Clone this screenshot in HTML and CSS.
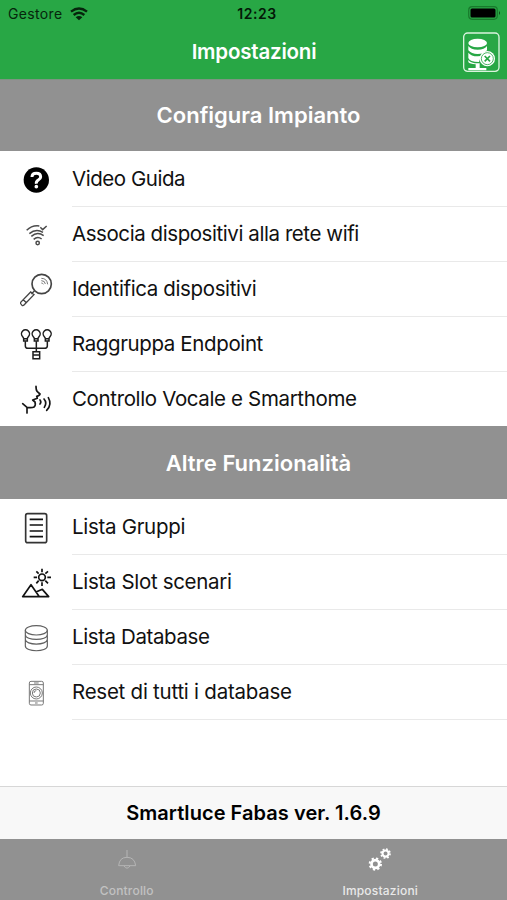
FILE: index.html
```html
<!DOCTYPE html>
<html lang="it">
<head>
<meta charset="utf-8">
<title>Impostazioni</title>
<link rel="stylesheet" href="styles.css">
</head>
<body>
<div class="app">
  <header class="top">
    <div class="status">
      <div class="carrier"><span>Gestore</span>
        <svg width="18" height="14" viewBox="0 0 54 42"><g fill="none" stroke="#06250c" stroke-width="7"><path d="M3 14Q27-5 51 14M11 24Q27 10 43 24"/></g><path d="M17 31Q27 23 37 31L27 40Z" fill="#06250c"/></svg>
      </div>
      <div class="clock">12:23</div>
      <svg class="battery" width="33" height="15" viewBox="0 0 33 15"><rect x=".7" y=".7" width="28.6" height="12.6" rx="3.5" fill="none" stroke="#187a2c" stroke-width="1.2"/><rect x="2.5" y="2.5" width="25" height="9" rx="1.5"/><path d="M31 5q2 2 0 4z" fill="#0c4d19"/></svg>
    </div>
    <div class="nav">
      <h1>Impostazioni</h1>
      <svg class="db" width="38" height="42" viewBox="0 0 114 126"><rect x="5" y="3" width="106" height="115" rx="12" fill="none" stroke="#d9f3dd" stroke-width="4"/><g fill="#fff"><ellipse cx="47" cy="33" rx="28" ry="13"/><path d="M19 42Q26 53 47 53T75 42V55Q66 66 47 66T19 55ZM19 62Q27 73 47 73L57 72 51 90Q23 90 19 78ZM19 84Q27 95 53 94V108H73V115H19V108H41V97Q23 96 19 90Z"/><circle cx="76" cy="80" r="23"/></g><path d="M68 72l16 16m0-16L68 88" stroke="#28a745" stroke-width="5"/><circle cx="76" cy="80" r="18" fill="none" stroke="#28a745" stroke-width="2.5"/></svg>
    </div>
  </header>
  <main>
    <h2 class="first">Configura Impianto</h2>
    <ul>
      <li><svg class="icon" viewBox="0 0 72 55"><g transform="translate(10 4) scale(.33333)"><circle cx="79" cy="75" r="38"/><path d="M66 66Q66 55 79 55T92 66Q92 71 85 75T79 86" fill="none" stroke="#fff" stroke-width="9"/><circle cx="79" cy="95" r="5.5" fill="#fff"/></g></svg><span class="w1">Video Guida</span></li>
      <li><svg class="icon" viewBox="0 0 72 55"><g transform="translate(10 -51) scale(.33333)" fill="none" stroke="#4b4b4b" stroke-width="4.5"><circle cx="83" cy="264" r="5"/><path d="M50 226Q66 210 88 213M58 236Q78 219 99 232M64 244Q82 228 101 242M71 253Q83 242 95 252M91 217l7 7 12-11"/></g></svg><span class="w2">Associa dispositivi alla rete wifi</span></li>
      <li><svg class="icon" viewBox="0 0 72 55"><g transform="translate(10 1) scale(.33333)" fill="none" stroke="#444" stroke-width="4"><circle cx="95" cy="66" r="29" stroke-width="5"/><path d="M73 87l-9 9M62 90L32 121q-2 4 4 9 3 2 6-1L72 98ZM40 113l9 9"/><path d="M94 49q17 0 19 18M94 56q11 0 12 10M94 63q5 0 6 4" stroke="#777" stroke-width="3"/></g></svg><span class="w3">Identifica dispositivi</span></li>
      <li><svg class="icon" viewBox="0 0 72 55"><g transform="translate(10 -54) scale(.33333)" fill="none" stroke="#1d1d1d" stroke-width="4.5"><path id="bulb" d="M41 230q0-3-3-6a12 12 0 1 1 17 0q-3 3-3 6zM41 230v7h11v-7"/><use href="#bulb" x="32"/><use href="#bulb" x="65"/><path d="M46 238v14q0 7 8 7h49q9 0 9-7V238M79 238v31M69 269h20v21H69zM69 279h20"/></g></svg><span class="w4">Raggruppa Endpoint</span></li>
      <li><svg class="icon" viewBox="0 0 72 55"><g transform="translate(10 -1) scale(.33333)" fill="none" stroke="#151515" stroke-width="5" stroke-linecap="round" stroke-linejoin="round"><path d="M78 49Q78 62 82 65L90 72Q89 77 80 79L82 85 68 90 75 96Q78 106 72 111 66 114 51 112L38 101M51 112V129M90 90q5 6 0 12M102 87q10 11 1 25M115 83q12 21-5 38"/></g></svg><span class="w5">Controllo Vocale e Smarthome</span></li>
    </ul>
    <h2 class="second">Altre Funzionalità</h2>
    <ul>
      <li><svg class="icon" viewBox="0 0 72 55"><g transform="translate(10 1) scale(.33333)" fill="none" stroke="#333" stroke-width="5"><rect x="47" y="41" width="63" height="87" rx="6"/><path d="M59 58h40M59 75h40M59 93h40M59 110h40" stroke="#111"/></g></svg><span class="w6">Lista Gruppi</span></li>
      <li><svg class="icon" viewBox="0 0 72 55"><g transform="translate(10 -54) scale(.33333)" fill="none" stroke="#111" stroke-width="5" stroke-linejoin="round"><circle cx="96" cy="232" r="10"/><path d="M96 206v11M96 247v11M71 232h10M112 232h11M79 214l7 7M106 242l8 8M114 214l-8 7M86 242l-7 8M38 290L63 254 88 290ZM78 276L97 268 116 290H88"/></g></svg><span class="w7">Lista Slot scenari</span></li>
      <li><svg class="icon" viewBox="0 0 72 55"><g transform="translate(10 1) scale(.33333)" fill="none" stroke="#606060" stroke-width="3.5"><ellipse cx="79" cy="61" rx="33" ry="14"/><path d="M46 61v13c0 19 66 19 66 0V61M46 75v13c0 19 66 19 66 0V75M46 89v19c0 19 66 19 66 0V89"/></g></svg><span class="w8">Lista Database</span></li>
      <li><svg class="icon" viewBox="0 0 72 55"><g transform="translate(10 -54) scale(.33333)" fill="none" stroke="#777" stroke-width="3"><rect x="58" y="214" width="42" height="71" rx="5"/><path d="M58 224h42M58 273h42M72 219h14M75 279h8"/><circle cx="79" cy="249" r="18"/><circle cx="79" cy="249" r="12"/><path d="M72 249q0-7 7-7"/></g></svg><span class="w9">Reset di tutti i database</span></li>
    </ul>
  </main>
  <div class="version"><span>Smartluce Fabas ver. 1.6.9</span></div>
  <footer>
    <div class="tab">
      <svg width="26" height="26" viewBox="0 0 78 78"><g transform="translate(-163 -43)" fill="none" stroke="#b5b5b5" stroke-width="3"><path d="M202 55v21M177 102Q179 77 202 77T228 102ZM193 103q9 13 18 0"/></g></svg>
      <span>Controllo</span>
    </div>
    <div class="tab active">
      <svg width="26" height="26" viewBox="0 0 78 78"><g transform="translate(-172 -43)" fill="none" stroke="#fff"><g id="gear"><circle cx="197" cy="97" r="11.5" stroke-width="8"/><circle cx="197" cy="97" r="17" stroke-width="6" stroke-dasharray="6.7 6.65"/></g><use href="#gear" transform="translate(70 -12) scale(.8)"/></g></svg>
      <span>Impostazioni</span>
    </div>
  </footer>
</div>
</body>
</html>
```
FILE: styles.css
```css
* { box-sizing: border-box; }
body { margin: 0; background: #fff; font-family: Inter, "Liberation Sans", sans-serif; color: #111; }
.app { width: 507px; height: 900px; display: flex; flex-direction: column; overflow: hidden; }
svg { display: block; flex: none; overflow: visible; }
.top { height: 79px; background: #28a745; flex: none; }
.status { height: 27px; padding: 0 6px 0 8px; display: grid; grid-template-columns: 1fr auto 1fr; align-items: center; }
.carrier { display: flex; align-items: center; gap: 7px; font-size: 14px; letter-spacing: .35px; color: #06250c; }
.clock { font-size: 14px; font-weight: 600; letter-spacing: .6px; color: #031807; padding-left: 5px; }
.battery { justify-self: end; }
.nav { height: 52px; padding: 4px 7px 0; display: grid; grid-template-columns: 1fr auto 1fr; align-items: start; }
.nav h1 { grid-column: 2; margin: 0; padding-left: 1px; font-size: 20.5px; line-height: 42px; font-weight: 600; letter-spacing: -.2px; color: #fff; }
.db { justify-self: end; margin-top: 1px; }
main { height: 707px; flex: none; }
h2 { margin: 0; display: flex; align-items: center; justify-content: center; background: #919191; color: #fff; font-size: 22px; font-weight: 600; white-space: nowrap; }
.first { height: 72px; padding: 0 0 2px 10px; border-top: 1px solid #7d9582; }
.second { height: 73px; padding-left: 10px; }
ul { list-style: none; margin: 0; padding: 0; }
li { height: 55px; display: flex; align-items: stretch; font-size: 20.5px; white-space: nowrap; }
li span { flex: 1; margin: 1px 0 -1px; line-height: 54px; border-bottom: 1px solid #e9e9e9; }
.w1 { letter-spacing: -.45px; }
.w2 { letter-spacing: -.43px; }
.w3 { letter-spacing: -.38px; }
.w4 { letter-spacing: -.38px; }
.w5 { letter-spacing: -.36px; border-bottom-color: transparent; }
.w6 { letter-spacing: -.3px; }
.w7 { letter-spacing: -.33px; }
.w8 { letter-spacing: -.4px; }
.w9 { letter-spacing: -.25px; }
.icon { width: 72px; height: 55px; }
.version { height: 53px; flex: none; display: flex; align-items: center; justify-content: center; background: #f8f8f8; border-top: 1px solid #d7d7d7; font-size: 20px; font-weight: 600; letter-spacing: .05px; color: #000; }
footer { height: 61px; flex: none; display: grid; grid-template-columns: 1fr 1fr; background: #919191; }
.tab { display: flex; flex-direction: column; align-items: center; padding-top: 7px; font-size: 12px; font-weight: 500; color: #c2c2c2; }
.tab span { margin-top: 11px; line-height: 16px; letter-spacing: .2px; }
.active { color: #e9e9e9; }
```
